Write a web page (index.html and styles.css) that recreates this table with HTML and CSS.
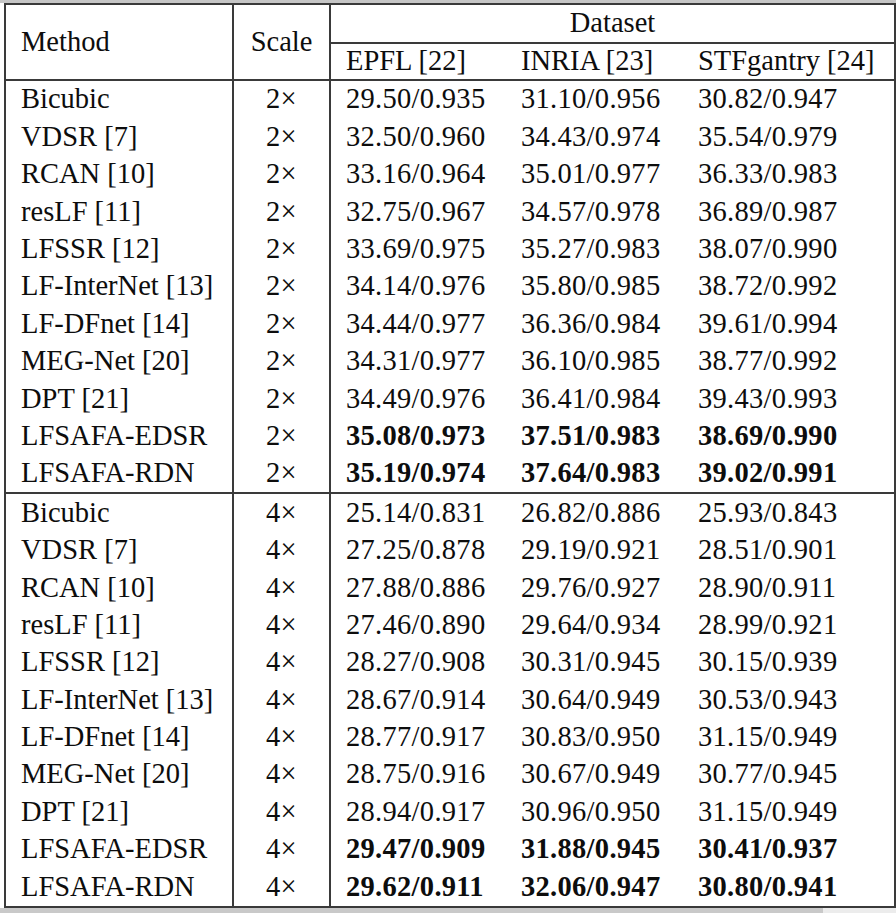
FILE: index.html
```html
<!DOCTYPE html>
<html lang="en">
<head>
    <meta charset="UTF-8">
    <meta name="viewport" content="width=device-width, initial-scale=1.0">
    <title>Results - LF super-resolution</title>
    <link rel="stylesheet" href="styles.css">
</head>
<body>
    <div class="top-strip"></div>
    <div class="sheet">
        <table class="results">
            <colgroup>
                <col class="c-method">
                <col class="c-scale">
                <col class="c-data1">
                <col class="c-data2">
                <col class="c-data3">
            </colgroup>
            <thead>
                <tr class="head-1">
                    <th rowspan="2" class="method">Method</th>
                    <th rowspan="2" class="scale">Scale</th>
                    <th colspan="3" class="dataset">Dataset</th>
                </tr>
                <tr class="head-2">
                    <th class="data">EPFL [22]</th>
                    <th class="data">INRIA [23]</th>
                    <th class="data">STFgantry [24]</th>
                </tr>
            </thead>
            <tbody>
                <tr><td class="method">Bicubic</td><td class="scale">2×</td><td>29.50/0.935</td><td>31.10/0.956</td><td>30.82/0.947</td></tr>
                <tr><td class="method">VDSR [7]</td><td class="scale">2×</td><td>32.50/0.960</td><td>34.43/0.974</td><td>35.54/0.979</td></tr>
                <tr><td class="method">RCAN [10]</td><td class="scale">2×</td><td>33.16/0.964</td><td>35.01/0.977</td><td>36.33/0.983</td></tr>
                <tr><td class="method">resLF [11]</td><td class="scale">2×</td><td>32.75/0.967</td><td>34.57/0.978</td><td>36.89/0.987</td></tr>
                <tr><td class="method">LFSSR [12]</td><td class="scale">2×</td><td>33.69/0.975</td><td>35.27/0.983</td><td>38.07/0.990</td></tr>
                <tr><td class="method">LF-InterNet [13]</td><td class="scale">2×</td><td>34.14/0.976</td><td>35.80/0.985</td><td>38.72/0.992</td></tr>
                <tr><td class="method">LF-DFnet [14]</td><td class="scale">2×</td><td>34.44/0.977</td><td>36.36/0.984</td><td>39.61/0.994</td></tr>
                <tr><td class="method">MEG-Net [20]</td><td class="scale">2×</td><td>34.31/0.977</td><td>36.10/0.985</td><td>38.77/0.992</td></tr>
                <tr><td class="method">DPT [21]</td><td class="scale">2×</td><td>34.49/0.976</td><td>36.41/0.984</td><td>39.43/0.993</td></tr>
                <tr class="ours"><td class="method">LFSAFA-EDSR</td><td class="scale">2×</td><td>35.08/0.973</td><td>37.51/0.983</td><td>38.69/0.990</td></tr>
                <tr class="ours"><td class="method">LFSAFA-RDN</td><td class="scale">2×</td><td>35.19/0.974</td><td>37.64/0.983</td><td>39.02/0.991</td></tr>
            </tbody>
            <tbody>
                <tr><td class="method">Bicubic</td><td class="scale">4×</td><td>25.14/0.831</td><td>26.82/0.886</td><td>25.93/0.843</td></tr>
                <tr><td class="method">VDSR [7]</td><td class="scale">4×</td><td>27.25/0.878</td><td>29.19/0.921</td><td>28.51/0.901</td></tr>
                <tr><td class="method">RCAN [10]</td><td class="scale">4×</td><td>27.88/0.886</td><td>29.76/0.927</td><td>28.90/0.911</td></tr>
                <tr><td class="method">resLF [11]</td><td class="scale">4×</td><td>27.46/0.890</td><td>29.64/0.934</td><td>28.99/0.921</td></tr>
                <tr><td class="method">LFSSR [12]</td><td class="scale">4×</td><td>28.27/0.908</td><td>30.31/0.945</td><td>30.15/0.939</td></tr>
                <tr><td class="method">LF-InterNet [13]</td><td class="scale">4×</td><td>28.67/0.914</td><td>30.64/0.949</td><td>30.53/0.943</td></tr>
                <tr><td class="method">LF-DFnet [14]</td><td class="scale">4×</td><td>28.77/0.917</td><td>30.83/0.950</td><td>31.15/0.949</td></tr>
                <tr><td class="method">MEG-Net [20]</td><td class="scale">4×</td><td>28.75/0.916</td><td>30.67/0.949</td><td>30.77/0.945</td></tr>
                <tr><td class="method">DPT [21]</td><td class="scale">4×</td><td>28.94/0.917</td><td>30.96/0.950</td><td>31.15/0.949</td></tr>
                <tr class="ours"><td class="method">LFSAFA-EDSR</td><td class="scale">4×</td><td>29.47/0.909</td><td>31.88/0.945</td><td>30.41/0.937</td></tr>
                <tr class="ours"><td class="method">LFSAFA-RDN</td><td class="scale">4×</td><td>29.62/0.911</td><td>32.06/0.947</td><td>30.80/0.941</td></tr>
            </tbody>
        </table>
    </div>
    <div class="bottom-strip"><div class="bottom-bar"></div></div>
</body>
</html>
```

FILE: styles.css
```css
body {
    margin: 0;
    padding: 0;
    background: #fff;
    color: #0d0d0d;
    font-family: 'Liberation Serif', 'Times New Roman', serif;
    overflow: hidden;
}

.top-strip {
    height: 3px;
    background: #c6c6c6;
}

.sheet {
    padding-left: 4px;
}

.results {
    border-collapse: collapse;
    table-layout: fixed;
    width: 890px;
    font-size: 28.5px;
    border: 2px solid #3a3a3a;
}

.c-method { width: 228px; }
.c-scale { width: 97px; }
.c-data1 { width: 176px; }
.c-data2 { width: 177px; }
.c-data3 { width: 212px; }

.results th,
.results td {
    font-weight: normal;
    padding: 0 0 0 15px;
    text-align: left;
    vertical-align: middle;
    white-space: nowrap;
    line-height: 1;
}

.results tbody td {
    letter-spacing: 0.3px;
}

.results td.method {
    letter-spacing: 0;
}

.results th.method,
.results td.method {
    border-right: 2px solid #3a3a3a;
}

.results th.scale,
.results td.scale {
    text-align: center;
    padding: 0;
    border-right: 2px solid #3a3a3a;
}

.head-1 th {
    height: 37px;
}

.head-1 .dataset {
    text-align: center;
    padding: 0;
    border-bottom: 2px solid #3a3a3a;
}

.head-2 th {
    height: 35px;
}

thead {
    border-bottom: 2px solid #3a3a3a;
}

tbody + tbody {
    border-top: 2px solid #3a3a3a;
}

.results tbody td {
    height: 37.4px;
}

.ours td {
    font-weight: bold;
}

.ours td.method,
.ours td.scale {
    font-weight: normal;
}

.bottom-strip {
    height: 6px;
    background: #ececec;
}

.bottom-bar {
    width: 823px;
    height: 6px;
    background: #c9c9c9;
}
```
